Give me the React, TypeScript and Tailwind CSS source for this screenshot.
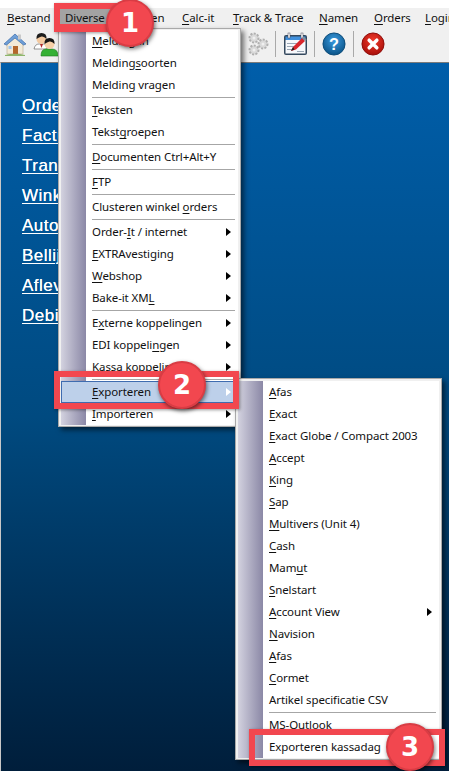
import React from "react";

type Entry = { label?: string; arrow?: boolean; active?: boolean };

const sep: Entry = {};

const mainMenu: Entry[] = [
  { label: "&Meldingen" },
  { label: "Melding&soorten" },
  { label: "Melding vragen" },
  sep,
  { label: "&Teksten" },
  { label: "Tekst&groepen" },
  sep,
  { label: "&Documenten Ctrl+Alt+Y" },
  sep,
  { label: "&FTP" },
  sep,
  { label: "Clusteren winkel &orders" },
  sep,
  { label: "Order-&It / internet", arrow: true },
  { label: "&EXTRAvestiging", arrow: true },
  { label: "&Webshop", arrow: true },
  { label: "Bake-it XM&L", arrow: true },
  sep,
  { label: "E&xterne koppelingen", arrow: true },
  { label: "EDI koppeli&ngen", arrow: true },
  { label: "&Kassa koppelingen", arrow: true },
  sep,
  { label: "&Exporteren", arrow: true, active: true },
  { label: "&Importeren", arrow: true },
];

const subMenu: Entry[] = [
  { label: "&Afas" },
  { label: "&Exact" },
  { label: "&Exact Globe / Compact 2003" },
  { label: "&Accept" },
  { label: "&King" },
  { label: "&Sap" },
  { label: "&Multivers (Unit 4)" },
  { label: "&Cash" },
  { label: "Mam&ut" },
  { label: "&Snelstart" },
  { label: "&Account View", arrow: true },
  { label: "&Navision" },
  { label: "&Afas" },
  { label: "&Cormet" },
  { label: "Artikel specificatie CSV" },
  sep,
  { label: "MS-Outlook" },
  { label: "Exporteren kassadag" },
];

const topItems = [
  { label: "&Bestand", cls: "w-[60px] pl-[7px]" },
  { label: "&Diverse", cls: "w-[55px] pl-[5px] bg-[#a3a3a3]" },
  { label: "&Planen", cls: "w-[67px] pl-[13px]" },
  { label: "&Calc-it", cls: "w-[51px]" },
  { label: "&Track & Trace", cls: "w-[86px]" },
  { label: "&Namen", cls: "w-[55px]" },
  { label: "&Orders", cls: "w-[51px]" },
  { label: "&Login", cls: "w-[40px]" },
];
const links = ["Orders", "Facturen", "Transport", "Winkels", "Automaat", "Bellijst", "Aflevering", "Debiteuren"];

// "&" marks the mnemonic letter, like in the win32 menu captions
function Caption({ text }: { text: string }) {
  const i = text.search(/&\S/);
  if (i < 0) return <span>{text}</span>;
  return (
    <span>
      {text.slice(0, i)}
      <u className="underline decoration-1 underline-offset-2">{text[i + 1]}</u>
      {text.slice(i + 2)}
    </span>
  );
}

function Arrow({ white }: { white?: boolean }) {
  return (
    <svg width="5" height="8" viewBox="0 0 5 8" className="shrink-0">
      <path d="M0 0 L5 4 L0 8 Z" fill={white ? "#ffffff" : "#000000"} />
    </svg>
  );
}

function Strip() {
  return <div className="w-[25px] shrink-0 self-stretch bg-gradient-to-r from-[#d3d2df] to-[#8b88a6]" />;
}

function MenuList({ items }: { items: Entry[] }) {
  return (
    <div className="bg-white">
      {items.map((item, i) => {
        if (!item.label) {
          return (
            <div key={i} className="flex h-[3px]">
              <Strip />
              <div className="flex flex-1 items-center pl-[6px] pr-[3px]">
                <div className="h-px w-full bg-[#a6a6a6]" />
              </div>
            </div>
          );
        }
        if (item.active) {
          return (
            <div key={i} className="flex h-[22px] items-center justify-between border border-[#3f6cb0] bg-[#bdd0ea] pl-[30px] pr-[6px]">
              <Caption text={item.label} />
              {item.arrow && <Arrow white />}
            </div>
          );
        }
        return (
          <div key={i} className="flex h-[22px] items-center">
            <Strip />
            <div className="flex flex-1 items-center justify-between pl-[6px] pr-[7px]">
              <Caption text={item.label} />
              {item.arrow && <Arrow />}
            </div>
          </div>
        );
      })}
    </div>
  );
}

function Badge({ n, className }: { n: number; className: string }) {
  return (
    <div
      className={
        "absolute z-30 flex h-[48px] w-[48px] items-center justify-center rounded-full border-2 border-[#d93c44] bg-[#f2474f] text-[26px] font-bold leading-none text-white shadow-[1px_2px_4px_rgba(0,0,0,0.55)] " +
        className
      }
      style={{ fontFamily: '"DejaVu Sans", Arial, sans-serif' }}
    >
      {n}
    </div>
  );
}

function HomeIcon() {
  return (
    <svg width="24" height="26" viewBox="0 0 24 26">
      <path d="M4 12 L4 23 L20 23 L20 12 L12 5 Z" fill="#f3ead8" stroke="#b7a98c" strokeWidth="0.6" />
      <path d="M1 13 L12 3 L23 13 L20.5 14 L12 7 L3.5 14 Z" fill="#6f9fd8" stroke="#3a6aa8" strokeWidth="0.7" />
      <rect x="15" y="3.5" width="3" height="5" fill="#c9c9c9" />
      <rect x="10" y="15" width="5" height="8" fill="#b5672c" />
      <rect x="5.5" y="15" width="3" height="3" fill="#9fc5ee" />
      <path d="M2 24 Q12 21.5 22 24 L22 25 L2 25 Z" fill="#8fb56b" />
    </svg>
  );
}

function PeopleIcon() {
  return (
    <svg width="26" height="26" viewBox="0 0 26 26">
      <path d="M1 18 Q2 13 6 13 L11 13 Q13 13 14 16 L14 18 Z" fill="#ffffff" stroke="#555" strokeWidth="0.6" />
      <path d="M7 13 L8.5 17 L10 13 Z" fill="#b02a2a" />
      <circle cx="8.5" cy="8" r="5" fill="#f3c9a0" />
      <path d="M3.5 8 Q3 2 8.5 2 Q14 2 13.5 8 Q11 5 8.5 5.5 Q6 6 3.5 8 Z" fill="#1d1d1d" />
      <path d="M8 25 Q8 18 13 18 L19 18 Q25 18 25 25 Z" fill="#35b135" stroke="#1f7a1f" strokeWidth="0.6" />
      <circle cx="16.5" cy="13" r="5" fill="#f6d0a8" />
      <path d="M11.5 13 Q11 7 16.5 7 Q22 7 21.5 13 Q19 10 16.5 10.5 Q14 11 11.5 13 Z" fill="#151515" />
    </svg>
  );
}

function GearsIcon() {
  return (
    <svg width="22" height="26" viewBox="0 0 22 26">
      <g fill="#d9d9d9" stroke="#b0b0b0" strokeWidth="2" strokeDasharray="2 1.4">
        <circle cx="7" cy="7" r="4.5" />
        <circle cx="16" cy="13" r="4.5" />
        <circle cx="7" cy="19" r="4.5" />
      </g>
      <g fill="#f0f0f0">
        <circle cx="7" cy="7" r="1.5" />
        <circle cx="16" cy="13" r="1.5" />
        <circle cx="7" cy="19" r="1.5" />
      </g>
    </svg>
  );
}

function PlannerIcon() {
  return (
    <svg width="25" height="24" viewBox="0 0 25 24">
      <rect x="1" y="3" width="23" height="20" rx="2" fill="#34495e" />
      <rect x="2.5" y="8" width="20" height="13.5" fill="#f6f8fb" />
      <rect x="2.5" y="4.5" width="20" height="3.5" fill="#3f8fdc" />
      <g stroke="#9aa7b5" strokeWidth="1">
        <path d="M4 11.5 H14" />
        <path d="M4 14.5 H11" />
        <path d="M4 17.5 H9" />
        <path d="M14 19.5 H21" />
      </g>
      <rect x="5" y="1" width="2" height="5" fill="#ffffff" stroke="#445" strokeWidth="0.5" />
      <rect x="18" y="1" width="2" height="5" fill="#ffffff" stroke="#445" strokeWidth="0.5" />
      <path d="M8 19 L10 15 L19 6 L22 9 L13 17.5 Z" fill="#d8262c" />
      <path d="M19 6 L20.5 4.5 L23.5 7.5 L22 9 Z" fill="#8a8f99" />
      <path d="M8 19 L10 15 L11.5 17.5 Z" fill="#222" />
    </svg>
  );
}

function HelpIcon() {
  return (
    <svg width="24" height="24" viewBox="0 0 25 25">
      <defs>
        <radialGradient id="helpFill" cx="50%" cy="35%" r="65%">
          <stop offset="0%" stopColor="#3a9ae0" />
          <stop offset="100%" stopColor="#0b5488" />
        </radialGradient>
      </defs>
      <circle cx="12.5" cy="12.5" r="11.5" fill="url(#helpFill)" stroke="#0a4a78" />
      <text x="12.5" y="18.5" textAnchor="middle" fontSize="17" fontWeight="700" fill="#fff" fontFamily="Liberation Sans, sans-serif">?</text>
    </svg>
  );
}

function CloseIcon() {
  return (
    <svg width="24" height="24" viewBox="0 0 25 25">
      <defs>
        <radialGradient id="closeFill" cx="50%" cy="35%" r="65%">
          <stop offset="0%" stopColor="#f23a2a" />
          <stop offset="100%" stopColor="#a80f0a" />
        </radialGradient>
      </defs>
      <circle cx="12.5" cy="12.5" r="11.5" fill="url(#closeFill)" stroke="#8d0c08" />
      <path d="M8.5 8.5 L16.5 16.5 M16.5 8.5 L8.5 16.5" stroke="#fff" strokeWidth="3.6" strokeLinecap="round" />
    </svg>
  );
}

function ToolSep() {
  return <div className="h-[26px] w-px bg-[#a9a9a9]" />;
}

export default function App() {
  return (
    <div
      className="relative h-[771px] w-[449px] overflow-hidden bg-white text-[11.5px] tracking-[-0.1px] text-[#111]"
      style={{ fontFamily: '"Noto Sans", Tahoma, sans-serif' }}
    >
      <div className="h-[8px]" />
      <div className="flex h-[20px] items-center overflow-hidden whitespace-nowrap bg-[#f0f0f0]">
        {topItems.map((t) => (
          <div key={t.label} className={"shrink-0 leading-[20px] " + t.cls}>
            <Caption text={t.label} />
          </div>
        ))}
      </div>
      <div className="flex h-[34px] items-center bg-[#f0f0f0] pb-[2px] pl-[3px]">
        <HomeIcon />
        <div className="ml-[6px]">
          <PeopleIcon />
        </div>
        <div className="ml-[188px]">
          <GearsIcon />
        </div>
        <div className="ml-[6px]">
          <ToolSep />
        </div>
        <div className="ml-[7px]">
          <PlannerIcon />
        </div>
        <div className="ml-[6px]">
          <ToolSep />
        </div>
        <div className="ml-[7px]">
          <HelpIcon />
        </div>
        <div className="ml-[7px]">
          <ToolSep />
        </div>
        <div className="ml-[7px]">
          <CloseIcon />
        </div>
      </div>
      <div className="h-[709px] border-l border-t border-l-[#c8c8c8] border-t-[#7a7a7a] bg-gradient-to-b from-[#005eaa] via-[#004a80] to-[#001e3b] pl-[21px] pt-[28px]">
        {links.map((l) => (
          <div
            key={l}
            className="h-[30px] text-[17px] leading-[30px] tracking-[0.5px] text-white underline underline-offset-2 [text-shadow:0_0_0.5px_#ffffff]"
            style={{ fontFamily: '"Liberation Sans", Arial, sans-serif' }}
          >
            {l}
          </div>
        ))}
      </div>

      {/* dropdown menus */}
      <div className="absolute left-[58px] top-[28px] z-10 w-[183px] border border-[#a9a9a9] bg-[#f0f0f0] px-[2px] pb-[1px] pt-px shadow-[3px_3px_5px_rgba(0,0,0,0.55)]">
        <MenuList items={mainMenu} />
      </div>
      <div className="absolute left-[235px] top-[378px] z-10 w-[207px] border border-[#a9a9a9] bg-[#f0f0f0] px-[2px] pb-[1px] pt-[2px] shadow-[3px_3px_5px_rgba(0,0,0,0.55)]">
        <MenuList items={subMenu} />
      </div>

      {/* tutorial callouts */}
      <div className="absolute left-[54px] top-[3px] z-20 h-[29px] w-[64px] border-x-[6px] border-b-[8px] border-t-[6px] border-[#f2474f] shadow-[1px_1px_3px_rgba(0,0,0,0.4)]" />
      <div className="absolute left-[54px] top-[371px] z-20 h-[38px] w-[185px] border-[6px] border-[#f2474f] shadow-[1px_1px_3px_rgba(0,0,0,0.4)]" />
      <div className="absolute left-[249px] top-[729px] z-20 h-[37px] w-[196px] border-[6px] border-[#f2474f] shadow-[1px_1px_3px_rgba(0,0,0,0.4)]" />
      <Badge n={1} className="left-[106px] top-[-1px]" />
      <Badge n={2} className="left-[158px] top-[361px]" />
      <Badge n={3} className="left-[386px] top-[723px]" />
    </div>
  );
}
